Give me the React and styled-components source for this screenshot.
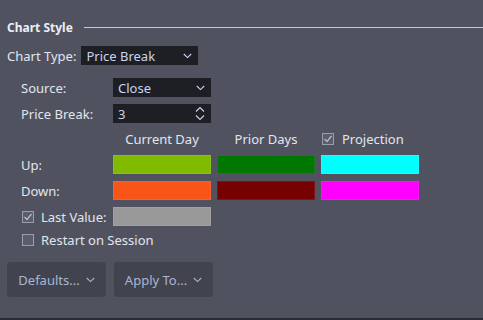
import React from "react";
import styled, { createGlobalStyle } from "styled-components";

const Global = createGlobalStyle`
  html, body { margin: 0; padding: 0; background: #2a2c33; }
  body { font-family: "Noto Sans", "Open Sans", sans-serif; font-size: 13px; color: #e2e5ef; }
  * { box-sizing: border-box; }
`;

const Panel = styled.div`
  height: 318px;
  background: #50535f;
  padding: 18px 0 0 7px;
  display: flex;
  flex-direction: column;
`;

const SectionHeader = styled.div`
  display: flex;
  align-items: center;
  gap: 11px;
  height: 18px;
`;

const SectionTitle = styled.span`
  font-weight: 700;
  font-size: 12px;
  color: #eceef5;
`;

const Rule = styled.div`
  flex: 1;
  height: 1px;
  background: #c3c7da;
  margin-top: 1px;
`;

const TypeRow = styled.div`
  display: flex;
  align-items: center;
  gap: 5px;
  margin-top: 10px;
`;

const Label = styled.span`
  color: #e2e5ef;
  white-space: nowrap;
`;

const Field = styled.div`
  height: 19px;
  width: ${(p) => p.$w || 98}px;
  background: #1e1f25;
  color: #c9d3ee;
  display: flex;
  align-items: center;
  justify-content: space-between;
  padding: 0 6px 0 5px;
  font-size: 13px;
`;

const Grid = styled.div`
  display: grid;
  grid-template-columns: 86px 98px 98px 98px;
  grid-template-rows: 19px 19px 18px 19px 19px 19px 14px;
  column-gap: 6px;
  row-gap: 7px;
  margin: 13px 0 0 14px;
  align-items: center;
`;

const Header = styled.div`
  text-align: center;
  color: #e2e5ef;
  display: flex;
  align-items: center;
  justify-content: ${(p) => (p.$left ? "flex-start" : "center")};
  gap: 8px;
  padding-left: ${(p) => (p.$left ? 1 : 0)}px;
`;

const Swatch = styled.div`
  height: 19px;
  background: ${(p) => p.$c};
  border: 1px solid rgba(255, 255, 255, 0.08);
`;

const CheckRow = styled.div`
  display: flex;
  align-items: center;
  gap: 7px;
  padding-left: 1px;
  grid-column: ${(p) => p.$span || "auto"};
`;

const Box = styled.span`
  width: 12px;
  height: 12px;
  border: 1px solid #9a9db0;
  background: #5a5d6b;
  display: inline-flex;
  align-items: center;
  justify-content: center;
  flex: none;
`;

const Buttons = styled.div`
  display: flex;
  gap: 8px;
  margin-top: 15px;
`;

const Button = styled.div`
  width: 99px;
  height: 35px;
  background: #41444f;
  border-radius: 3px;
  color: #a9b5d3;
  display: flex;
  align-items: center;
  justify-content: center;
  gap: 6px;
  font-size: 13px;
`;

const Chevron = ({ color = "#c9d3ee" }) => (
  <svg width="9" height="6" viewBox="0 0 9 6">
    <path d="M0.8 1 L4.5 4.6 L8.2 1" fill="none" stroke={color} strokeWidth="1.1" />
  </svg>
);

const Spin = () => (
  <svg width="10" height="15" viewBox="0 0 10 15">
    <path d="M1 5.5 L5 1.5 L9 5.5" fill="none" stroke="#c9d3ee" strokeWidth="1.1" />
    <path d="M1 9.5 L5 13.5 L9 9.5" fill="none" stroke="#c9d3ee" strokeWidth="1.1" />
  </svg>
);

const Check = ({ checked }) => (
  <Box>
    {checked && (
      <svg width="10" height="10" viewBox="0 0 10 10">
        <path d="M1.5 5 L4 7.5 L8.5 2" fill="none" stroke="#b8bccb" strokeWidth="1.2" />
      </svg>
    )}
  </Box>
);

export default function App() {
  return (
    <>
      <Global />
      <Panel>
        <SectionHeader>
          <SectionTitle>Chart Style</SectionTitle>
          <Rule />
        </SectionHeader>
        <TypeRow>
          <Label>Chart Type:</Label>
          <Field $w={117}>
            <span>Price Break</span>
            <Chevron />
          </Field>
        </TypeRow>
        <Grid>
          <Label>Source:</Label>
          <Field>
            <span>Close</span>
            <Chevron />
          </Field>
          <span />
          <span />

          <Label>Price Break:</Label>
          <Field>
            <span>3</span>
            <Spin />
          </Field>
          <span />
          <span />

          <span />
          <Header>Current Day</Header>
          <Header>Prior Days</Header>
          <Header $left>
            <Check checked />
            <span>Projection</span>
          </Header>

          <Label>Up:</Label>
          <Swatch $c="#80bb00" />
          <Swatch $c="#007700" />
          <Swatch $c="#00ffff" />

          <Label>Down:</Label>
          <Swatch $c="#fa5518" />
          <Swatch $c="#770000" />
          <Swatch $c="#ff00ff" />

          <CheckRow>
            <Check checked />
            <Label>Last Value:</Label>
          </CheckRow>
          <Swatch $c="#999999" />
          <span />
          <span />

          <CheckRow $span="1 / span 4">
            <Check />
            <Label>Restart on Session</Label>
          </CheckRow>
        </Grid>
        <Buttons>
          <Button>
            <span>Defaults...</span>
            <Chevron color="#a9b5d3" />
          </Button>
          <Button>
            <span>Apply To...</span>
            <Chevron color="#a9b5d3" />
          </Button>
        </Buttons>
      </Panel>
    </>
  );
}
